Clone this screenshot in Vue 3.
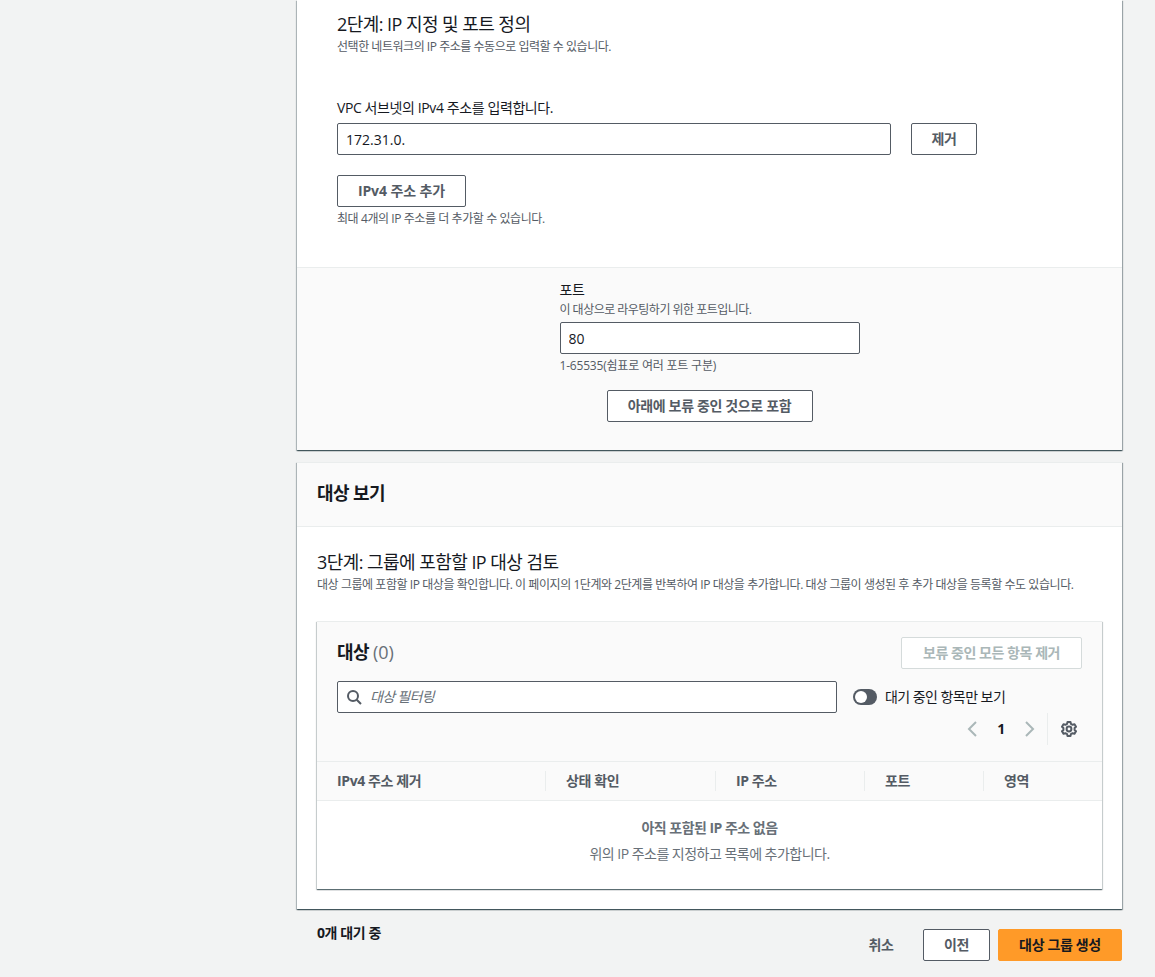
<script setup>
const columns = [
  { label: 'IPv4 주소 제거', width: 228 },
  { label: '상태 확인', width: 170 },
  { label: 'IP 주소', width: 149 },
  { label: '포트', width: 119 },
  { label: '영역', width: 119 },
]
</script>

<template>
  <div class="page">
    <main class="content">
      <section class="card first">
        <div class="step">
          <h3 class="step-title">2단계: IP 지정 및 포트 정의</h3>
          <p class="hint">선택한 네트워크의 IP 주소를 수동으로 입력할 수 있습니다.</p>
          <label class="label vpc-label">VPC 서브넷의 IPv4 주소를 입력합니다.</label>
          <div class="ip-row">
            <input class="input ip-input" value="172.31.0." />
            <button class="btn remove">제거</button>
          </div>
          <button class="btn add">IPv4 주소 추가</button>
          <p class="hint add-hint">최대 4개의 IP 주소를 더 추가할 수 있습니다.</p>
        </div>
        <div class="port-panel">
          <div class="port-box">
            <label class="label">포트</label>
            <p class="hint port-hint">이 대상으로 라우팅하기 위한 포트입니다.</p>
            <input class="input port-input" value="80" />
            <p class="hint port-range">1-65535(쉼표로 여러 포트 구분)</p>
          </div>
          <button class="btn include">아래에 보류 중인 것으로 포함</button>
        </div>
      </section>

      <section class="card second">
        <header class="card-head">대상 보기</header>
        <div class="review">
          <h3 class="step-title">3단계: 그룹에 포함할 IP 대상 검토</h3>
          <p class="hint review-hint">대상 그룹에 포함할 IP 대상을 확인합니다. 이 페이지의 1단계와 2단계를 반복하여 IP 대상을 추가합니다. 대상 그룹이 생성된 후 추가 대상을 등록할 수도 있습니다.</p>
          <div class="table-card">
            <div class="table-top">
              <div class="title-row">
                <h2 class="table-title">대상 <span class="count">(0)</span></h2>
                <button class="btn disabled" disabled>보류 중인 모든 항목 제거</button>
              </div>
              <div class="filter-row">
                <div class="search">
                  <svg class="search-icon" viewBox="0 0 16 16" width="16" height="16" fill="none" stroke="#545b64" stroke-width="2">
                    <circle cx="7" cy="7" r="5" />
                    <path d="M10.7 10.7 15 15" />
                  </svg>
                  <input class="search-input" placeholder="대상 필터링" />
                </div>
                <div class="toggle-wrap">
                  <span class="toggle"><span class="knob"></span></span>
                  <span class="toggle-label">대기 중인 항목만 보기</span>
                </div>
              </div>
              <div class="pager-row">
                <svg class="chev" viewBox="0 0 16 16" width="16" height="16" fill="none" stroke="#aab7b8" stroke-width="2">
                  <path d="M11 1 4 8l7 7" />
                </svg>
                <span class="page-num">1</span>
                <svg class="chev" viewBox="0 0 16 16" width="16" height="16" fill="none" stroke="#aab7b8" stroke-width="2">
                  <path d="m5 1 7 7-7 7" />
                </svg>
                <span class="pager-sep"></span>
                <svg class="gear" viewBox="0 0 16 16" width="16" height="16" fill="none" stroke="#545b64" stroke-width="2" stroke-linejoin="round">
                  <path d="M6.5 1h3l.4 1.9 1.7.9 1.9-.6 1.5 2.6-1.4 1.3v1.8l1.4 1.3-1.5 2.6-1.9-.6-1.7.9-.4 1.9h-3l-.4-1.9-1.7-.9-1.9.6-1.5-2.6 1.4-1.3V7.1L1 5.8l1.5-2.6 1.9.6 1.7-.9z" />
                  <circle cx="8" cy="8" r="2.4" />
                </svg>
              </div>
            </div>
            <div class="thead">
              <div v-for="col in columns" :key="col.label" class="th" :style="{ width: col.width + 'px' }">
                <span class="th-inner">{{ col.label }}</span>
              </div>
            </div>
            <div class="empty">
              <strong class="empty-title">아직 포함된 IP 주소 없음</strong>
              <p class="empty-text">위의 IP 주소를 지정하고 목록에 추가합니다.</p>
            </div>
          </div>
        </div>
      </section>

      <footer class="footer">
        <span class="pending">0개 대기 중</span>
        <div class="actions">
          <button class="btn link">취소</button>
          <button class="btn prev">이전</button>
          <button class="btn primary">대상 그룹 생성</button>
        </div>
      </footer>
    </main>
  </div>
</template>

<style>
html, body { margin: 0; background: #f2f3f3; }
</style>

<style scoped>
.page {
  height: 977px;
  overflow: hidden;
  background: #f2f3f3;
  font-family: "Open Sans", "Noto Sans CJK KR", sans-serif;
  color: #16191f;
  font-size: 14px;
  line-height: 20px;
  letter-spacing: -0.4px;
}
.content { width: 825px; margin-left: 297px; }
.card {
  background: #fff;
  box-shadow: 0 1px 1px 0 rgba(0, 28, 36, 0.5), 1px 1px 1px 0 rgba(0, 28, 36, 0.3), -1px 1px 1px 0 rgba(0, 28, 36, 0.22);
}
.first { height: 450px; display: flex; flex-direction: column; }
.step { padding: 13px 40px 0; height: 267px; box-sizing: border-box; }
.step-title { margin: 0; font-size: 18px; line-height: 22px; font-weight: 400; letter-spacing: -0.55px; }
.hint { margin: 0; font-size: 12px; line-height: 16px; color: #545b64; letter-spacing: -0.42px; }
.step-title + .hint { margin-top: 4px; letter-spacing: -0.47px; }
.review-hint { white-space: nowrap; }
.label { display: block; font-size: 14px; line-height: 20px; }
.vpc-label { margin-top: 43px; }
.input {
  box-sizing: border-box;
  height: 32px;
  border: 1px solid #545b64;
  border-radius: 2px;
  padding: 0 8px;
  font: inherit;
  letter-spacing: 0;
  color: #16191f;
  background: #fff;
  outline: none;
}
.ip-row { display: flex; gap: 20px; margin-top: 5px; }
.ip-input { width: 554px; }
.btn {
  box-sizing: border-box;
  height: 32px;
  padding: 0 20px;
  border: 1px solid #545b64;
  border-radius: 2px;
  background: #fff;
  color: #545b64;
  font: inherit;
  font-weight: 700;
  letter-spacing: -0.35px;
  white-space: nowrap;
}
.add { margin-top: 20px; width: 129px; padding: 0; letter-spacing: -0.1px; }
.remove { width: 66px; padding: 0; }
.add-hint { margin-top: 4px; }
.port-panel {
  flex: 1;
  background: #fafafa;
  border-top: 1px solid #eaeded;
  padding-top: 12px;
  box-sizing: border-box;
  display: flex;
  flex-direction: column;
  align-items: center;
}
.port-box { width: 300px; }
.port-hint { margin-top: 2px; letter-spacing: -0.52px; }
.port-input { display: block; width: 300px; margin-top: 4px; }
.port-range { margin-top: 4px; letter-spacing: -0.2px; }
.include { margin-top: 16px; width: 206px; padding: 0; color: #545b64; }
.second { margin-top: 12px; height: 447px; }
.card-head {
  box-sizing: border-box;
  height: 65px;
  padding: 0 20px 3px;
  display: flex;
  align-items: center;
  background: #fafafa;
  border-bottom: 1px solid #eaeded;
  font-size: 18px;
  font-weight: 700;
  letter-spacing: -0.6px;
  border-top: 1px solid #eaeded;
}
.review { padding: 24px 20px 20px; }
.review .review-hint { margin-top: 4px; letter-spacing: -0.44px; }
.table-card {
  margin-top: 28px;
  height: 268px;
  box-sizing: border-box;
  background: #fff;
  border-top: 1px solid #eaeded;
  box-shadow: 0 1px 1px 0 rgba(0, 28, 36, 0.5), 1px 1px 1px 0 rgba(0, 28, 36, 0.15), -1px 1px 1px 0 rgba(0, 28, 36, 0.15);
}
.table-top { background: #fafafa; height: 140px; box-sizing: border-box; padding: 15px 20px 0; border-bottom: 1px solid #eaeded; }
.title-row { display: flex; justify-content: space-between; align-items: center; }
.table-title { margin: 0; font-size: 18px; line-height: 30px; height: 32px; font-weight: 700; letter-spacing: -0.6px; }
.count { font-weight: 400; color: #687078; letter-spacing: 0; }
.disabled {
  width: 181px;
  padding: 0;
  color: #aab7b8;
  border-color: #d5dbdb;
  background: #fff;
  letter-spacing: -0.45px;
}
.filter-row { display: flex; align-items: center; margin-top: 12px; }
.search {
  box-sizing: border-box;
  width: 500px;
  height: 32px;
  border: 1px solid #545b64;
  border-radius: 2px;
  background: #fff;
  display: flex;
  align-items: center;
  padding-left: 8px;
  gap: 8px;
}
.search-icon { flex: none; }
.search-input {
  flex: 1;
  min-width: 0;
  border: none;
  outline: none;
  font: inherit;
  font-style: italic;
  letter-spacing: -0.7px;
  background: transparent;
  padding: 0;
}
.search-input::placeholder { color: #687078; opacity: 1; }
.toggle-wrap { display: flex; align-items: center; gap: 8px; margin-left: 16px; }
.toggle {
  width: 24px;
  height: 16px;
  border-radius: 8px;
  background: #545b64;
  position: relative;
  display: block;
}
.knob {
  position: absolute;
  left: 2px;
  top: 2px;
  width: 12px;
  height: 12px;
  border-radius: 50%;
  background: #fff;
}
.toggle-label { font-size: 14px; line-height: 18px; letter-spacing: -0.55px; }
.pager-row { display: flex; align-items: center; justify-content: flex-end; height: 32px; padding-right: 5px; }
.chev { flex: none; }
.page-num { font-weight: 700; width: 40px; text-align: center; }
.pager-sep { width: 1px; height: 32px; background: #eaeded; margin: 0 13px 0 10px; }
.thead { display: flex; height: 38px; border-bottom: 1px solid #eaeded; box-sizing: content-box; background: #fafafa; }
.th { box-sizing: border-box; display: flex; align-items: center; padding: 0 0 0 20px; position: relative; font-weight: 700; color: #545b64; }
.th + .th { padding-left: 21px; }
.th + .th::before {
  content: "";
  position: absolute;
  left: 0;
  top: 9px;
  height: 20px;
  width: 1px;
  background: #eaeded;
}
.empty { text-align: center; padding-top: 16px; color: #687078; letter-spacing: -0.52px; }
.empty-title { display: block; line-height: 22px; }
.empty-text { margin: 4px 0 0; line-height: 22px; }
.footer { display: flex; justify-content: space-between; align-items: flex-start; margin-top: 20px; padding-left: 20px; }
.pending { font-weight: 700; line-height: 20px; margin-top: -6px; }
.actions { display: flex; align-items: center; }
.link { border: none; background: transparent; width: 64px; padding: 0; }
.prev { width: 67px; padding: 0; margin-left: 10px; }
.primary {
  width: 124px;
  padding: 0;
  margin-left: 8px;
  background: #ff9a28;
  border-color: #ff9a28;
  color: #16191f;
}
</style>
